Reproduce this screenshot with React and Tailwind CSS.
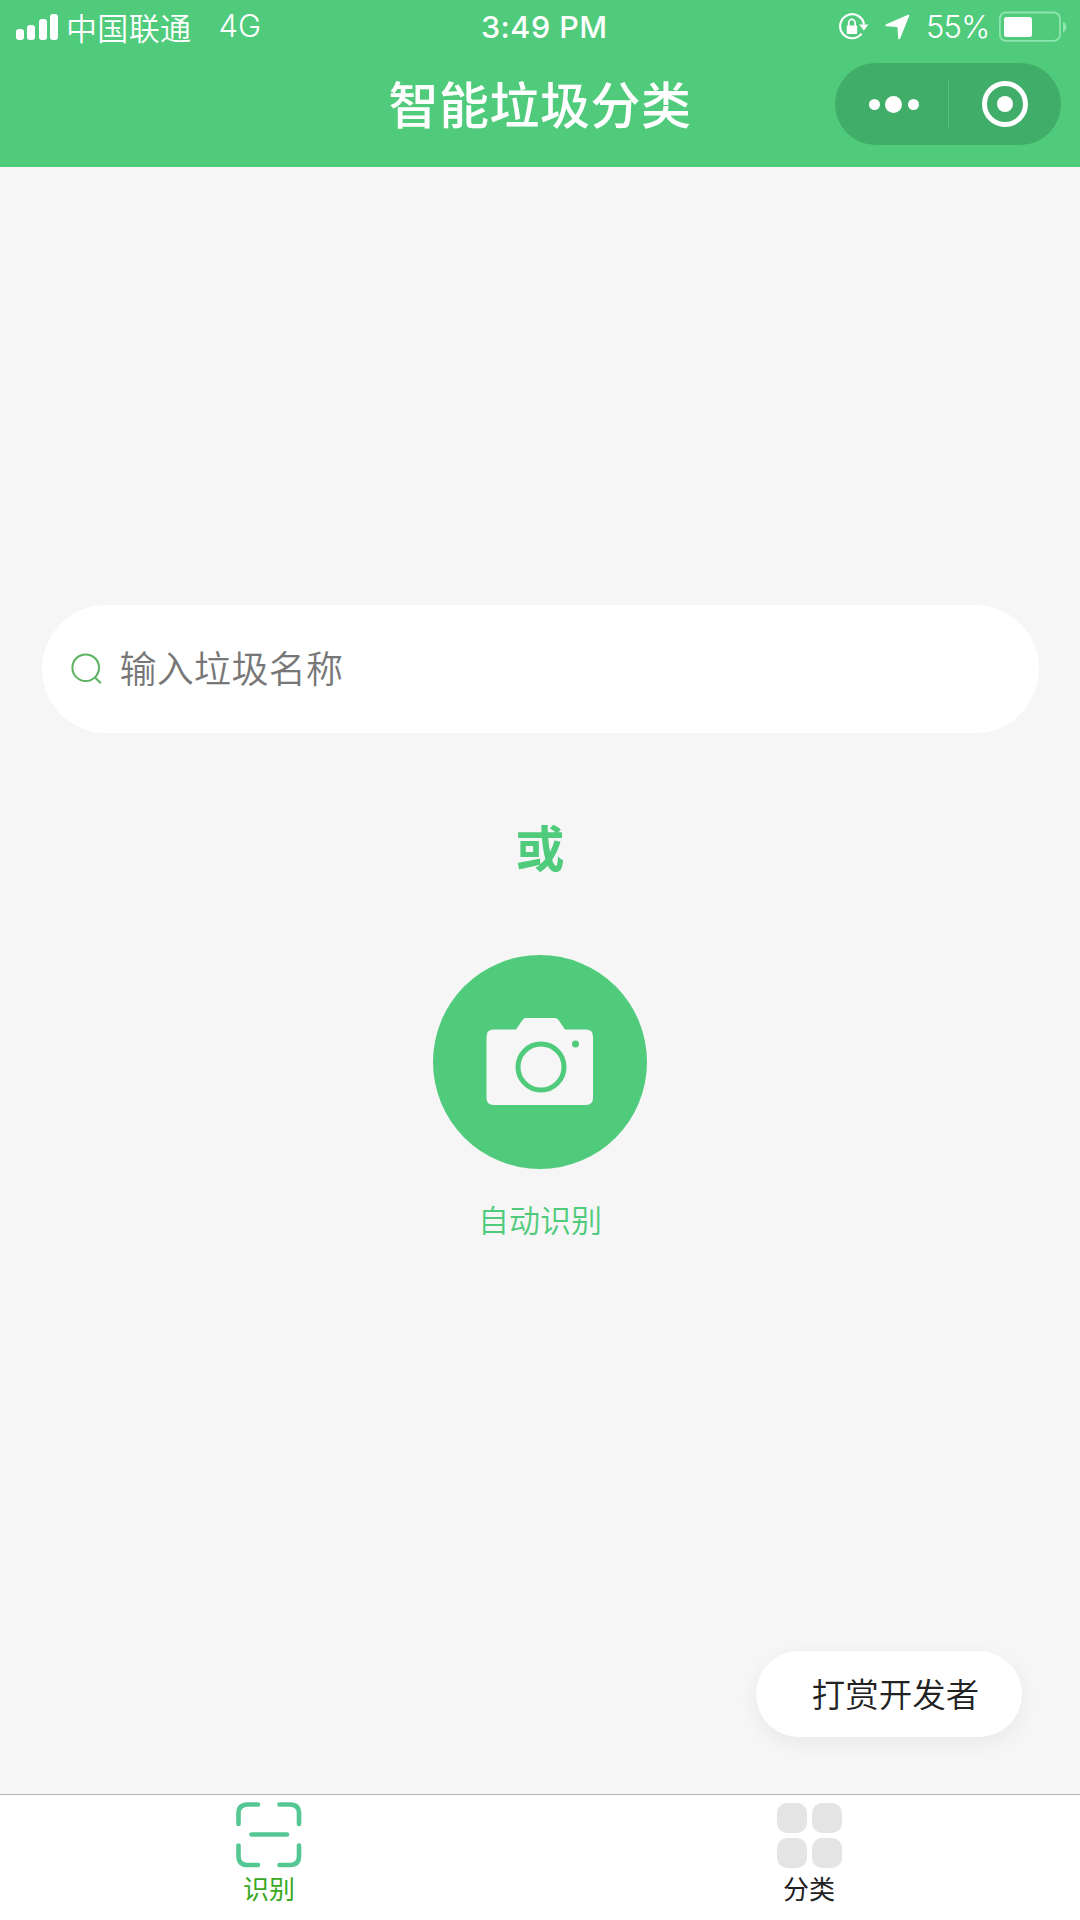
import React from 'react';

const SignalBars = () => (
  <div className="flex items-end gap-[3.3px] h-[26px]">
    <span className="w-2 h-[11px] rounded-[3px] bg-white" />
    <span className="w-2 h-[15px] rounded-[3px] bg-white" />
    <span className="w-2 h-[21px] rounded-[3px] bg-white" />
    <span className="w-2 h-[26px] rounded-[3px] bg-white" />
  </div>
);

const RotationLock = () => (
  <svg width="30" height="28" viewBox="0 0 30 28" fill="none">
    <path d="M22.6 20.6A12 12 0 1 1 25 11.500" stroke="white" strokeWidth="2.2" />
    <path d="M20 11.400h9.500l-4.600 6z" fill="white" />
    <rect x="7.700" y="12.500" width="10.500" height="8.500" rx="1" fill="white" />
    <path d="M9.700 13v-3a3.200 3.600 0 0 1 6.400 0V13" stroke="white" strokeWidth="1.7" />
  </svg>
);

const LocationArrow = () => (
  <svg width="25" height="26" viewBox="0 0 25 26">
    <path
      d="M23 .8 1.2 10.3c-1.2.6-1 1.8.2 1.900l11 .8.8 11.400c.1 1.300 1.400 1.300 1.900.2L24.2 2C24.500 1 23.900.4 23 .8z"
      fill="white"
    />
  </svg>
);

const Battery = () => (
  <svg width="70" height="32" viewBox="0 0 70 32" fill="none">
    <rect x="1.9" y="1.5" width="60" height="28.4" rx="6" stroke="#8fe5ae" strokeWidth="1.8" />
    <rect x="6" y="6" width="28" height="20" rx="2.5" fill="white" />
    <path d="M65 10.500c4.500 2.200 4.500 8.800 0 11z" fill="#8fe5ae" />
  </svg>
);

const StatusBar = () => (
  <div className="grid grid-cols-[481px_1fr_auto] items-center h-[54px] pl-4 pr-3 text-white">
    <div className="flex items-center -mt-px">
      <SignalBars />
      <span className="ml-2 text-[31px] font-[350] tracking-[0.4px] leading-[52px]">中国联通</span>
      <span className="ml-[27px] font-['Inter'] text-[31px] font-light">4G</span>
    </div>
    <span className="-ml-4 font-['Inter'] text-[30.500px] font-medium tracking-[0.5px]">3:49 PM</span>
    <div className="flex items-center -ml-px">
      <RotationLock />
      <div className="ml-[16px]">
        <LocationArrow />
      </div>
      <span className="ml-[16px] w-[65px] font-['Inter'] text-[31px] font-light tracking-[-0.8px] mt-px">55%</span>
      <div className="ml-[7px] -mt-px">
        <Battery />
      </div>
    </div>
  </div>
);

const Capsule = () => (
  <div className="absolute right-[19px] top-[63px] flex items-center w-[226px] h-[82px] rounded-full bg-[#40ae69]">
    <div className="flex items-center justify-center gap-[5.5px] w-[113px] pl-1">
      <span className="size-[11px] rounded-full bg-white" />
      <span className="size-[17px] rounded-full bg-white" />
      <span className="size-[11px] rounded-full bg-white" />
    </div>
    <span className="w-px h-12 bg-[#5cba7f]" />
    <div className="flex-1 flex justify-center">
      <div className="flex items-center justify-center size-[46px] rounded-full border-[5px] border-white">
        <span className="size-4 rounded-full bg-white" />
      </div>
    </div>
  </div>
);

const Header = () => (
  <header className="relative h-[167px] bg-[#50cb7c]">
    <StatusBar />
    <h1 className="text-center text-[50px] leading-[96px] font-medium tracking-[0.5px] text-white">智能垃圾分类</h1>
    <Capsule />
  </header>
);

const CameraIcon = () => (
  <svg width="108" height="88" viewBox="0 0 108 88">
    <path
      d="M7.500 11.500H30L36.500 2q1.300-2 3.500-2h29q2.200 0 3.500 2l6.500 9.500h21q7 0 7 7V80q0 7-7 7H7.500q-7 0-7-7V18.500q0-7 7-7z"
      fill="#f6f6f6"
    />
    <circle cx="55" cy="49" r="23" fill="none" stroke="#50cb7c" strokeWidth="5" />
    <circle cx="89.500" cy="26" r="3.500" fill="#50cb7c" />
  </svg>
);

const ScanIcon = () => (
  <svg width="66" height="66" viewBox="0 0 66 66" fill="none" stroke="#55c793" strokeWidth="4.600" strokeLinecap="round">
    <path d="M2.500 22V11.500q0-9 9-9H22M43.500 2.500H54q9 0 9 9V22M63 43.500V54q0 9-9 9H43.500M22 63H11.500q-9 0-9-9V43.500" />
    <path d="M15.500 32.500H51" />
  </svg>
);

const GridIcon = () => (
  <div className="grid grid-cols-2 gap-[5px] w-[65px] h-[65px]">
    {[0, 1, 2, 3].map((i) => (
      <span key={i} className="rounded-[10px] bg-[#e4e4e4]" />
    ))}
  </div>
);

const TabBar = () => (
  <nav className="grid grid-cols-2 h-[126px] border-t border-[#b2b2b2] bg-white text-[26px] leading-[40px]">
    <div className="flex flex-col items-center pt-[7px] pr-[2px]">
      <ScanIcon />
      <span className="text-[#3aa822]">识别</span>
    </div>
    <div className="flex flex-col items-center pt-[8px] pr-[2px]">
      <GridIcon />
      <span className="text-[#222]">分类</span>
    </div>
  </nav>
);

export default function App() {
  return (
    <div className="flex flex-col w-[1080px] h-[1920px] bg-[#f6f6f6] font-['Noto_Sans_CJK_SC',sans-serif]">
      <Header />
      <main className="flex-1 flex flex-col items-center">
        <div className="mt-[438px] flex items-center w-[997px] h-[128px] pl-[29px] rounded-full bg-white">
          <svg width="32" height="32" viewBox="0 0 32 32" fill="none" stroke="#5cb361" strokeWidth="2">
            <circle cx="14.700" cy="14.700" r="13.300" />
            <path d="M23.800 24.200l6 6" />
          </svg>
          <span className="ml-[17px] -mt-[3px] text-[37px] tracking-[0.3px] font-[350] text-[#777]">输入垃圾名称</span>
        </div>
        <p className="mt-[73px] text-[49px] leading-[80px] font-bold text-[#50cb7c]">或</p>
        <button className="mt-[69px] flex items-center justify-center shrink-0 size-[214px] rounded-full bg-[#50cb7c]">
          <CameraIcon />
        </button>
        <p className="mt-[30px] text-[31px] leading-[40px] font-[350] text-[#50cb7c]">自动识别</p>
        <button className="mt-auto mb-[57px] mr-[58px] self-end w-[266px] h-[86px] pl-[13px] pb-[2px] rounded-full bg-white text-[33.500px] font-[350] text-[#222] shadow-[0_6px_20px_rgba(0,0,0,0.06)]">
          打赏开发者
        </button>
      </main>
      <TabBar />
    </div>
  );
}
